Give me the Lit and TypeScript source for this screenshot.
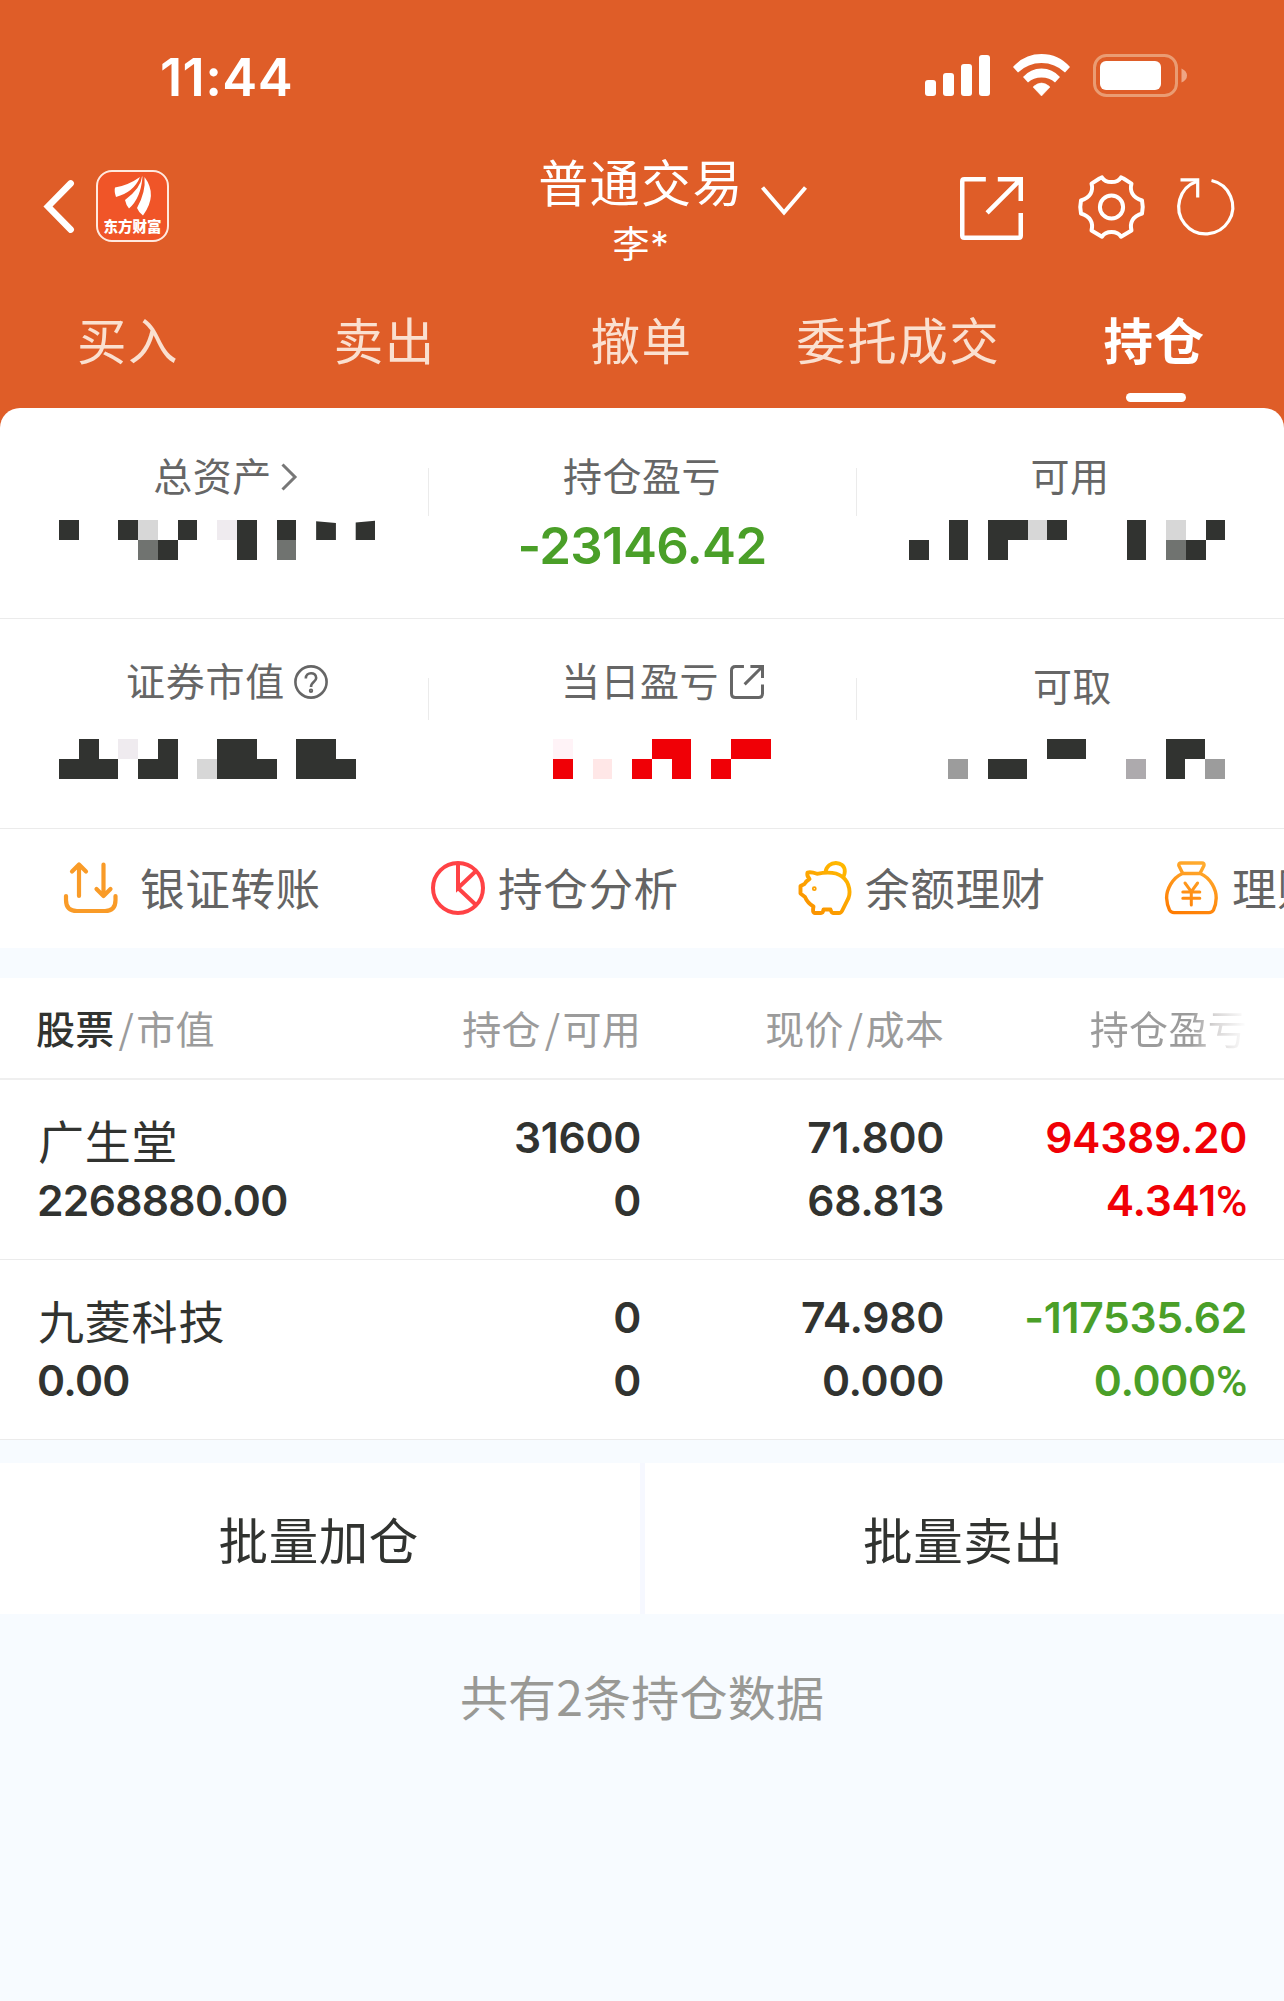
import { LitElement, html, css, svg, nothing } from "lit";
import { customElement, property } from "lit/decorators.js";

const CELL_W = 19.78;
const CELL_H = 20;

/* One letter per masked tile: d dark, g grey, m mid grey, l light grey, p pale, r red, q pale red, w faint pink */
const TILE: Record<string, string> = {
  d: "#313330", g: "#707370", m: "#9c9c9c", n: "#adaaad", l: "#d7d7d7",
  p: "#efebef", r: "#f00006", q: "#ffe7e7", w: "#fff3f7",
};

@customElement("masked-amount")
export class MaskedAmount extends LitElement {
  @property({ attribute: false }) rows: string[] = [];
  static styles = css`
    :host { display: block; }
    .tiles { display: block; }
  `;
  render() {
    const cols = Math.max(...this.rows.map((r) => r.length));
    return html`<svg class="tiles" width=${cols * CELL_W} height="40" shape-rendering="crispEdges">
      ${this.rows.map((row, y) => [...row].map((c, x) => {
        if (c === "a" || c === "b") {
          const l = x * CELL_W, r = l + CELL_W;
          const [tl, tr] = c === "a" ? [1.2, 3] : [2.6, 0.6];
          return svg`<polygon fill=${TILE.d} shape-rendering="auto" points="${l},${tl} ${r},${tr} ${r},20 ${l},20"></polygon>`;
        }
        return TILE[c]
          ? svg`<rect x=${x * CELL_W} y=${y * CELL_H} width=${CELL_W} height=${CELL_H} fill=${TILE[c]}></rect>`
          : nothing;
      }))}
    </svg>`;
  }
}

interface Holding {
  name: string; value: string; held: string; usable: string;
  price: string; cost: string; gain: string; rate: string; tone: string;
}

const HOLDINGS: Holding[] = [
  { name: "广生堂", value: "2268880.00", held: "31600", usable: "0", price: "71.800", cost: "68.813", gain: "94389.20", rate: "4.341", tone: "up" },
  { name: "九菱科技", value: "0.00", held: "0", usable: "0", price: "74.980", cost: "0.000", gain: "-117535.62", rate: "0.000", tone: "down" },
];

/* Six shallow notches around a ring */
const gearPath = "M21.5 3.5 L24 2.4 C26 5.8 29.5 7 33.5 7 C37.500 7 41 5.800 43 2.400 L45.500 3.500 L53.500 8.600 C51.500 16 54.500 22.500 64 25.500 Q65.500 32 64 38.500 C54.500 41.500 51.500 48 53.500 55.500 L43 61.700 C41 58.300 37.500 57 33.500 57 C29.500 57 26 58.300 24 61.700 L13.500 55.500 C15.500 48 12.500 41.500 3 38.500 Q1.500 32 3 25.500 C12.500 22.500 15.500 16 13.500 8.600 Z";

@customElement("app-root")
export class AppRoot extends LitElement {
  static styles = css`
    :host {
      display: block;
      width: 1284px;
      height: 2001px;
      overflow: hidden;
      background: #f7fbff;
      color: #313330;
      font-family: Inter, "Noto Sans CJK SC", sans-serif;
    }
    * { box-sizing: border-box; }
    svg { display: block; flex: none; overflow: visible; }
    .cjk { font-family: "Noto Sans CJK SC", sans-serif; white-space: nowrap; }
    .top { height: 428px; background: #df5d28; color: #fff; }
    .status { display: flex; height: 150px; padding: 54px 96px 0 160px; justify-content: space-between; }
    .clock { font-size: 52.5px; line-height: 47px; font-weight: 600; letter-spacing: 0.4px; }
    .nav { display: grid; grid-template-columns: 440px 1fr 440px; height: 140px; }
    .nav-left { display: flex; padding: 20px 0 0 44px; gap: 22px; }
    .back { margin-top: 10px; }
    .logo {
      width: 73px; height: 72px; border: 2px solid #ffe9df; border-radius: 16px;
      background: #f05528; display: flex; flex-direction: column; align-items: center;
    }
    .logo-mark { margin-top: 4px; }
    .logo-name { font-size: 14.500px; line-height: 16px; font-weight: 900; margin-top: 2px; }
    .nav-mid { display: flex; justify-content: center; padding-left: 61px; gap: 17px; }
    .account { display: flex; flex-direction: column; align-items: center; }
    .title { font-size: 50px; line-height: 60px; letter-spacing: 1.4px; }
    .user { font-size: 37px; line-height: 44px; margin-top: 10px; letter-spacing: 0.8px; }
    .star { font-family: Inter, sans-serif; }
    .drop { margin-top: 36px; }
    .nav-right { display: flex; padding: 25px 0 0 116px; }
    .export { margin-top: 2px; }
    .gear { margin-left: 55px; }
    .reload { margin-left: 32px; }
    .tabs { display: grid; grid-template-columns: repeat(5, 1fr); height: 118px; }
    .tab { display: flex; flex-direction: column; align-items: center; padding-top: 16px; font-size: 49.5px; line-height: 66px; letter-spacing: 1.5px; margin-left: -1px; color: #fae0d0; }
    .tab.on { color: #fff; font-weight: 700; margin-left: -2px; }
    .bar { width: 60px; height: 9px; border-radius: 4.500px; background: #fff; margin: 21px 0 0 3px; }
    .sheet { margin-top: -20px; border-radius: 20px 20px 0 0; background: #fff; height: 540px; }
    .stats { display: grid; grid-template-columns: repeat(3, 428px); border-bottom: 1px solid #ebebeb; }
    .stats.first { height: 211px; }
    .stats.second { height: 210px; }
    .stat { display: flex; flex-direction: column; }
    .label { display: flex; justify-content: center; height: 60px; color: #666; font-size: 39px; line-height: 58px; letter-spacing: 0.5px; }
    .first .stat { padding-top: 37px; background: linear-gradient(#ebebeb, #ebebeb) left 60px / 1px 48px no-repeat; }
    .second .stat { padding-top: 31px; background: linear-gradient(#ebebeb, #ebebeb) left 59px / 1px 42px no-repeat; }
    .stats .stat:first-child { background: none; }
    .stats .lower { padding-top: 36px; }
    .first masked-amount { margin-top: 15px; }
    .second masked-amount { margin-top: 29px; }
    .second .lower masked-amount { margin-top: 24px; }
    .m-left { margin-left: 59px; }
    .m-mid { margin-left: 125px; }
    .m-r1 { margin-left: 53px; }
    .m-r2 { margin-left: 92px; }
    .s22 { padding-left: 22px; }
    .s25 { padding-left: 26px; letter-spacing: 0.7px; }
    .s40 { padding-left: 41px; }
    .s5 { padding-left: 5px; }
    .arrow { margin: 18px 0 0 9px; }
    .help { margin: 15px 0 0 9px; }
    .jump { margin: 15px 0 0 11px; }
    .pl { text-align: center; color: #4a9f28; font-size: 51px; line-height: 62px; font-weight: 600; margin-top: 10px; letter-spacing: -0.7px; }
    .tools { display: flex; height: 119px; overflow: hidden; padding-left: 63px; color: #646464; font-size: 44.6px; line-height: 116px; letter-spacing: 0.6px; }
    .tool { display: flex; width: 367px; flex: none; }
    .tool svg { margin-top: 32px; }
    .t1 { margin-left: 21px; }
    .t2 { margin-left: 12px; }
    .grid { display: grid; grid-template-columns: 300px 304px 303px 303px; padding-left: 37px; }
    .head { margin-top: 30px; height: 102px; background: #fff; border-bottom: 2px solid #efefef; color: #9b9b9b; font-size: 39px; line-height: 98px; }
    .head div { text-align: right; letter-spacing: 0.3px; }
    .head .first-col { text-align: left; margin-left: -1px; }
    .sort { color: #313330; font-weight: 500; }
    .slash { padding: 0 2px 0 4px; }
    .fade { background: linear-gradient(90deg, #9b9b9b 64%, #d8d6d6 80%, #fff 100%); -webkit-background-clip: text; background-clip: text; color: transparent; }
    .row { height: 180px; background: #fff; border-bottom: 1px solid #ebebeb; }
    .cell { display: flex; flex-direction: column; align-items: flex-end; padding-top: 26px; font-size: 42.6px; line-height: 63px; font-weight: 600; letter-spacing: -0.3px; }
    .cell.first-col { align-items: flex-start; letter-spacing: -0.7px; }
    .name { font-size: 46px; font-weight: 400; letter-spacing: 0.8px; height: 63px; line-height: 66px; margin-left: 1px; }
    .pct { font-family: Roboto, sans-serif; font-weight: 500; }
    .up { color: #f00006; }
    .down { color: #4a9f28; }
    .actions { display: grid; grid-template-columns: 1fr 1fr; gap: 5px; margin-top: 23px; height: 151px; background: #f6f8ff; }
    .action { background: #fff; text-align: center; font-size: 49.5px; line-height: 151px; letter-spacing: 0.6px; padding-right: 2px; }
    .total { text-align: center; color: #999995; font-size: 48px; line-height: 71px; margin-top: 46px; letter-spacing: 0.2px; }
  `;

  private jumpIcon(size: number, stroke: number, r: number) {
    const h = stroke / 2, e = size - h;
    return svg`<g fill="none" stroke="currentColor" stroke-width=${stroke}>
      <path d="M${size * 0.41} ${h} H${h + r} Q${h} ${h} ${h} ${h + r} V${e - r} Q${h} ${e} ${h + r} ${e} H${e - r} Q${e} ${e} ${e} ${e - r} V${size * 0.57}"></path>
      <path d="M${size * 0.6} ${h} H${e} V${size * 0.38} M${e} ${h} L${size * 0.43} ${size * 0.57}"></path>
    </g>`;
  }

  render() {
    return html`
      <header class="top">
        <div class="status">
          <div class="clock">11:44</div>
          <svg width="263" height="44" viewBox="925 54 263 44" fill="#fff">
            <rect x="925" y="80" width="11" height="16" rx="3"></rect>
            <rect x="943" y="73" width="11" height="23" rx="3"></rect>
            <rect x="961" y="64" width="11" height="32" rx="3"></rect>
            <rect x="979" y="55" width="11" height="41" rx="3"></rect>
            <path d="M1013 67 Q1024.500 54 1041.500 54 Q1058.500 54 1070 67 L1065 72.500 Q1055 63 1041.500 63 Q1028 63 1018 72.500 Z"></path>
            <path d="M1023 77 Q1030.500 68.500 1041.500 68.500 Q1052.500 68.500 1060 77 L1055 82.500 Q1049.500 77.500 1041.500 77.500 Q1033.500 77.500 1028 82.500 Z"></path>
            <path d="M1033 87 Q1041.500 79 1050 87 L1041.500 96 Z" stroke="#fff" stroke-width="0.500"></path>
            <rect x="1094.500" y="55.500" width="82" height="40" rx="12" fill="none" stroke="#ea9c73" stroke-width="3"></rect>
            <rect x="1100" y="61" width="61" height="29" rx="6"></rect>
            <path d="M1181.500 68.500 Q1187 71 1187 75.500 Q1187 80 1181.500 82.500 Z" fill="#efa584"></path>
          </svg>
        </div>
        <div class="nav">
          <div class="nav-left">
            <svg class="back" width="30" height="53" viewBox="0 0 30 53" fill="none" stroke="#fff" stroke-width="6.500" stroke-linecap="round"><path d="M26.700 3.400 L4 26.500 L26.700 49.600" stroke-linejoin="miter"></path></svg>
            <div class="logo">
              <svg class="logo-mark" width="38" height="40" viewBox="0 0 38 40" fill="#fff">
                <path d="M1 11.500 Q14 9.500 26 1 Q20 16 2 21 Q0 15 1 11.500 Z"></path>
                <path d="M28 0.500 Q27 12 11 24 Q12 29 15 32.500 Q27 22 28.500 0.500 Z"></path>
                <path d="M30.500 1 Q32 16 23 32 Q25 37 29 39.500 Q44 19 30.500 1 Z"></path>
              </svg>
              <div class="logo-name cjk">东方财富</div>
            </div>
          </div>
          <div class="nav-mid">
            <div class="account">
              <div class="title cjk">普通交易</div>
              <div class="user cjk">李<span class="star">*</span></div>
            </div>
            <svg class="drop" width="46" height="30" viewBox="0 0 46 30" fill="none" stroke="#fff" stroke-width="4"><path d="M1.500 1.500 L23 26.500 L44.500 1.500"></path></svg>
          </div>
          <div class="nav-right">
            <svg class="export" width="63" height="63">${this.jumpIcon(63, 4.5, 2)}</svg>
            <svg class="gear" width="67" height="64" viewBox="0 0 67 64" fill="none" stroke="#fff" stroke-width="4" stroke-linejoin="round"><path d=${gearPath}></path><circle cx="33.500" cy="32" r="11.600"></circle></svg>
            <svg class="reload" width="57" height="60" viewBox="0 0 57 60" fill="none" stroke="#fff" stroke-width="3.200"><path d="M34.500 5.500 A27 27 0 1 1 19.500 6.500"></path><path d="M3.500 4.800 H20.700 V22.500"></path></svg>
          </div>
        </div>
        <nav class="tabs cjk">
          ${["买入", "卖出", "撤单", "委托成交"].map((t) => html`<div class="tab">${t}</div>`)}
          <div class="tab on">持仓<div class="bar"></div></div>
        </nav>
      </header>

      <section class="sheet">
        <div class="stats first">
          <div class="stat">
            <div class="label s22 cjk">总资产<svg class="arrow" width="16" height="28" viewBox="0 0 16 28" fill="none" stroke="#777" stroke-width="3"><path d="M1.500 1.500 L14 14 L1.500 26.500"></path></svg></div>
            <masked-amount class="m-left" .rows=${["d..dl.d.pd.d.a.b", "....gd...d.g...."]}></masked-amount>
          </div>
          <div class="stat">
            <div class="label cjk">持仓盈亏</div>
            <div class="pl">-23146.42</div>
          </div>
          <div class="stat">
            <div class="label cjk">可用</div>
            <masked-amount class="m-r1" .rows=${["..d.ddld...d.l.d", "d.d.d......d.gd."]}></masked-amount>
          </div>
        </div>
        <div class="stats second">
          <div class="stat">
            <div class="label s25 cjk">证券市值<svg class="help" width="34" height="34" viewBox="0 0 34 34" fill="none" stroke="#666" stroke-width="2.600"><circle cx="17" cy="17" r="15.600"></circle><path d="M11.800 13.500 C11.800 6.500 22.200 6.500 22.200 13 C22.200 17 17 16.500 17 22"></path><circle cx="17" cy="25.700" r="0.900"></circle></svg></div>
            <masked-amount class="m-left" .rows=${[".d.p.d..dd..dd.", "ddd.dd.lddd.ddd"]}></masked-amount>
          </div>
          <div class="stat">
            <div class="label s40 cjk">当日盈亏<svg class="jump" width="34" height="34">${this.jumpIcon(34, 3, 4)}</svg></div>
            <masked-amount class="m-mid" .rows=${["w....rr..rr", "r.q.r.r.r.."]}></masked-amount>
          </div>
          <div class="stat lower">
            <div class="label s5 cjk">可取</div>
            <masked-amount class="m-r2" .rows=${[".....dd....dd.", "m.dd.....n.d.m"]}></masked-amount>
          </div>
        </div>
        <div class="tools cjk">
          <div class="tool">
            <svg width="56" height="54" viewBox="0 0 56 54" fill="none" stroke="#f99b28" stroke-width="4.200" stroke-linecap="round" stroke-linejoin="round"><path d="M16 35 V4 M9 10.500 L16 3.500 L23 10.500 M40.500 3.500 V34 M33.500 28 L40.500 35 L47.500 28"></path><path d="M3 35 V39 Q3 50 14 50 H42 Q52.500 50 52.500 39 V35"></path></svg>
            <span class="t1">银证转账</span>
          </div>
          <div class="tool">
            <svg width="56" height="54" viewBox="0 0 56 54" fill="none" stroke="#ff4245" stroke-width="4"><circle cx="28" cy="27" r="25"></circle><path d="M28 2 V27 L46 10 M28 27 L46 44"></path></svg>
            <span class="t2">持仓分析</span>
          </div>
          <div class="tool">
            <svg width="56" height="54" viewBox="0 0 56 54" fill="none" stroke="url(#pig)" stroke-width="3.900" stroke-linejoin="round"><defs><linearGradient id="pig" x1="0" y1="54" x2="40" y2="0" gradientUnits="userSpaceOnUse"><stop offset="0" stop-color="#fa8c00"></stop><stop offset="1" stop-color="#ffb800"></stop></linearGradient></defs>
              <path d="M12.500 18 Q9.500 15 10.500 11.500 Q14 10.500 20 12.800 Q37 9.500 45 15.500 C53 21.500 54.500 33 50 40 L45 50 Q44 52 42 52 H36 Q34.500 52 33.500 48.500 H26.500 Q26 52 24 52 H18 Q15 52 16.500 45.500 Q10.500 42 8 36 L3.500 32.500 V25 L7.500 23 Q9 20 12.500 18 Z"></path>
              <path d="M28.500 11 C30 -1 48 -1 47.800 10.500 Q47.800 13 46.500 15.500"></path><ellipse cx="17.300" cy="27.700" rx="0.900" ry="0.900" stroke-width="3"></ellipse></svg>
            <span class="t2">余额理财</span>
          </div>
          <div class="tool">
            <svg width="56" height="54" viewBox="0 0 56 54" fill="none" stroke="url(#bag)" stroke-width="3.400" stroke-linejoin="round" stroke-linecap="round"><defs><linearGradient id="bag" x1="10" y1="54" x2="30" y2="0" gradientUnits="userSpaceOnUse"><stop offset="0" stop-color="#ff7a00"></stop><stop offset="1" stop-color="#ffab2e"></stop></linearGradient></defs>
              <path d="M18.500 12 L14.800 4.500 Q14.500 2 17 2 H38 Q40.500 2 40 4.500 L36.200 12"></path>
              <path d="M18.500 12.500 C8 17 2.500 29 2.600 37 Q3 44 5.500 49 Q7 51.600 10 51.600 H45 Q48 51.600 49.500 49 Q52 44 52.200 37 C52.300 29 47 17 36.200 12.500 Z"></path>
              <path d="M21 22 L27.300 30.700 L33.600 22 M27.300 30.700 V44 M18.800 30.900 H35.800 M18.800 37.300 H35.800" stroke-width="3"></path></svg>
            <span class="t2">理财</span>
          </div>
        </div>
      </section>

      <div class="grid head cjk">
        <div class="first-col"><span class="sort">股票</span><span class="slash">/</span>市值</div>
        <div>持仓<span class="slash">/</span>可用</div>
        <div>现价<span class="slash">/</span>成本</div>
        <div><span class="fade">持仓盈亏</span></div>
      </div>
      ${HOLDINGS.map((h) => html`
        <div class="grid row">
          <div class="cell first-col"><span class="name cjk">${h.name}</span><span>${h.value}</span></div>
          <div class="cell"><span>${h.held}</span><span>${h.usable}</span></div>
          <div class="cell"><span>${h.price}</span><span>${h.cost}</span></div>
          <div class="cell ${h.tone}"><span>${h.gain}</span><span>${h.rate}<span class="pct">%</span></span></div>
        </div>`)}
      <div class="actions cjk">
        <div class="action">批量加仓</div>
        <div class="action">批量卖出</div>
      </div>
      <div class="total cjk">共有2条持仓数据</div>
    `;
  }
}
